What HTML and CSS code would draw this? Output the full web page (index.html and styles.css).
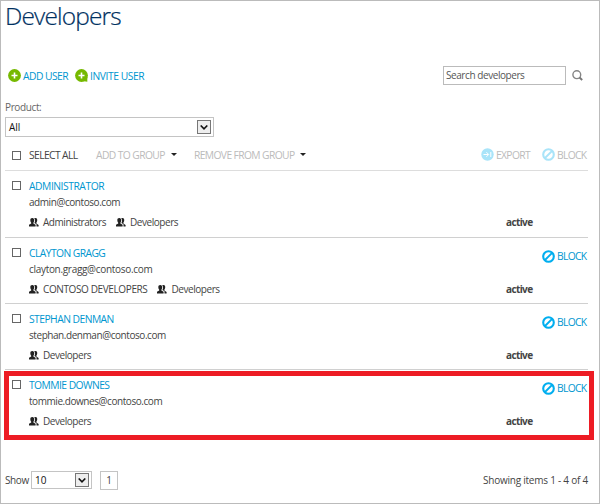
FILE: index.html
```html
<!DOCTYPE html>
<html lang="en">
<head>
<meta charset="utf-8">
<title>Developers</title>
<link rel="stylesheet" href="styles.css">
</head>
<body>
<svg class="defs" width="0" height="0">
  <symbol id="people" viewBox="0 0 10 9"><path d="M3.3 0C4.7 0 5.3 1 5.2 2.4 5.1 3.6 4.6 4.3 4.4 4.7V5.5L6.6 6.7V8.5H0V6.8L2.2 5.6V4.7C1.7 4.2 1.3 3.4 1.3 2.3 1.3.9 2 0 3.3 0Z"/><path d="M5.2.3C7.7-.4 8.4.8 8.2 2.6 8.1 3.8 7.7 4.2 7.4 4.8V5.6L9.6 6.9V8.5H7.5V6.2L5.4 5.1C6.1 3.8 6.4 1.6 5.2.3Z"/></symbol>
  <symbol id="block" viewBox="0 0 13 13"><circle cx="6.5" cy="6.5" r="5.3" fill="none" stroke="currentColor" stroke-width="2.1"/><path d="M3 10 10 3" stroke="currentColor" stroke-width="1.8"/></symbol>
  <symbol id="chevron" viewBox="0 0 8 5"><path d="M.7.5 4 3.8 7.3.5" fill="none" stroke="#111" stroke-width="1.6"/></symbol>
</svg>
<main class="page">
  <h1 class="title">Developers</h1>
  <div class="toolbar">
    <a class="action add"><svg width="13" height="13" viewBox="0 0 13 13"><circle cx="6.5" cy="6.5" r="6.4" fill="#76b900"/><path d="M3.5 6.5h6M6.5 3.5v6" stroke="#fff" stroke-width="1.6"/></svg><span>ADD USER</span></a>
    <a class="action invite"><svg width="13" height="13" viewBox="0 0 13 13"><circle cx="6.5" cy="6.5" r="6.4" fill="#76b900"/><path d="M12.3 8v4.8L7.5 12Z" fill="#76b900"/><path d="M3.5 6.5h6M6.5 3.5v6" stroke="#fff" stroke-width="1.6"/></svg><span>INVITE USER</span></a>
    <div class="search"><span>Search developers</span></div>
    <svg class="lens" width="11" height="11" viewBox="0 0 11 11"><circle cx="4.8" cy="4.7" r="3.9" fill="none" stroke="#858585" stroke-width="1.4"/><path d="M7.5 7.5 10.2 10" stroke="#777" stroke-width="1.9"/></svg>
  </div>
  <div class="label"><span>Product:</span></div>
  <div class="select product"><span>All</span><i class="drop"><svg width="8" height="5"><use href="#chevron"/></svg></i></div>
  <div class="bulk">
    <i class="check"></i><span class="all">SELECT ALL</span>
    <span class="off group-add">ADD TO GROUP</span><i class="caret"></i>
    <span class="off group-remove">REMOVE FROM GROUP</span><i class="caret"></i>
    <a class="action off export"><svg width="13" height="13" viewBox="0 0 13 13"><circle cx="6.5" cy="6.5" r="6.2" fill="#a9e4f9"/><path d="M2.5 6.5h5M5.4 4.2l2.3 2.3-2.3 2.3M9.8 4v5" fill="none" stroke="#fff" stroke-width="1"/></svg><span>EXPORT</span></a>
    <a class="action off block"><svg width="13" height="13"><use href="#block"/></svg><span>BLOCK</span></a>
  </div>
  <section class="row first">
    <i class="check"></i>
    <div class="info">
      <a class="name n1">ADMINISTRATOR</a><div class="mail m1">admin@contoso.com</div>
      <div class="groups"><span class="group"><svg width="10" height="9"><use href="#people"/></svg><span class="g-admin">Administrators</span></span><span class="group"><svg width="10" height="9"><use href="#people"/></svg><span>Developers</span></span></div>
    </div>
    <b class="status">active</b>
  </section>
  <section class="row">
    <i class="check"></i>
    <div class="info">
      <a class="name n2">CLAYTON GRAGG</a><div class="mail m2">clayton.gragg@contoso.com</div>
      <div class="groups"><span class="group"><svg width="10" height="9"><use href="#people"/></svg><span class="g-contoso">CONTOSO DEVELOPERS</span></span><span class="group"><svg width="10" height="9"><use href="#people"/></svg><span>Developers</span></span></div>
    </div>
    <b class="status">active</b>
    <a class="action block"><svg width="13" height="13"><use href="#block"/></svg><span>BLOCK</span></a>
  </section>
  <section class="row">
    <i class="check"></i>
    <div class="info">
      <a class="name n3">STEPHAN DENMAN</a><div class="mail m3">stephan.denman@contoso.com</div>
      <div class="groups"><span class="group"><svg width="10" height="9"><use href="#people"/></svg><span>Developers</span></span></div>
    </div>
    <b class="status">active</b>
    <a class="action block"><svg width="13" height="13"><use href="#block"/></svg><span>BLOCK</span></a>
  </section>
  <section class="row last">
    <i class="check"></i>
    <div class="info">
      <a class="name n4">TOMMIE DOWNES</a><div class="mail m4">tommie.downes@contoso.com</div>
      <div class="groups"><span class="group"><svg width="10" height="9"><use href="#people"/></svg><span>Developers</span></span></div>
    </div>
    <b class="status">active</b>
    <a class="action block"><svg width="13" height="13"><use href="#block"/></svg><span>BLOCK</span></a>
    <div class="highlight"></div>
  </section>
  <footer class="footer">
    <span class="show">Show</span>
    <div class="select size"><span>10</span><i class="drop"><svg width="8" height="5"><use href="#chevron"/></svg></i></div>
    <span class="pager">1</span>
    <span class="count">Showing items 1 - 4 of 4</span>
  </footer>
</main>
</body>
</html>
```
FILE: styles.css
```css
* { box-sizing: border-box; }
body { margin: 0; background: #fff; font: 10px/16px "Open Sans", "Noto Sans", sans-serif; color: #444; }
svg { display: block; flex: none; }
.defs { position: absolute; }
.page { width: 600px; height: 504px; border: 1px solid #bbb; padding: 0 11px 0 4px; white-space: nowrap; overflow: hidden; }
.title { margin: 0; height: 60px; font-size: 24.5px; line-height: 30px; font-weight: 300; color: #00305f; letter-spacing: -.85px; padding-left: 0; -webkit-text-stroke: .2px #00305f; }
.toolbar { display: flex; align-items: center; height: 30px; padding: 0 0 1px 3px; }
.action { display: flex; align-items: center; gap: 2px; color: #0096cf; font-size: 10.3px; letter-spacing: -.55px; }
.invite { letter-spacing: -.43px; }
.add { width: 67px; }
.search { margin-left: auto; width: 123px; height: 19px; border: 1px solid #bbb; padding-left: 2px; line-height: 17px; color: #555; letter-spacing: -.43px; }
.lens { margin: 0 5px 0 6px; }
.label { height: 26px; padding-top: 8px; color: #666; letter-spacing: -.38px; }
.select { display: flex; align-items: center; justify-content: space-between; border: 1px solid #c4c4c4; color: #111; }
.product { width: 209px; height: 20px; padding: 0 2px 0 3px; }
.drop { display: grid; place-items: center; width: 14px; height: 14px; border: 1px solid #777; background: #eee; }
.bulk { display: flex; align-items: center; height: 34px; border-bottom: 1px solid #ddd; padding: 2px 0 0 7px; }
.check { width: 9px; height: 9px; border: 1px solid #666; flex: none; }
.bulk .check { margin-top: 2px; }
.all { width: 67px; margin-left: 8px; font-size: 10.3px; letter-spacing: -.6px; }
.off { color: #bbb; font-size: 10.3px; }
.group-add { width: 75px; letter-spacing: -.6px; }
.group-remove { width: 106px; margin-left: 17px; letter-spacing: -.62px; }
.caret { border: 3px solid transparent; border-top-color: #222; border-bottom: 0; }
.export { width: 61px; margin-left: auto; letter-spacing: -.65px; }
.block { width: 46px; letter-spacing: -.7px; }
.block svg { color: #00aeef; }
.off.block svg { color: #a9e4f9; }
.row { position: relative; display: grid; grid-template-columns: 17px 477px 36px 46px; height: 66px; border-bottom: 1px solid #d0d0d0; padding: 7px 0 0 7px; }
.row.first { height: 67px; }
.row.last { border: 0; }
.row .check { margin-top: 3px; }
.name { display: block; color: #0096cf; font-size: 10.3px; }
.n1 { letter-spacing: -.45px; }
.n2 { letter-spacing: -.56px; }
.n3 { letter-spacing: -.53px; }
.n4 { letter-spacing: -.55px; }
.mail { letter-spacing: -.44px; }
.m2 { letter-spacing: -.31px; }
.groups { display: flex; gap: 10px; margin-top: 4px; letter-spacing: -.45px; }
.g-contoso { letter-spacing: -.38px; }
.group { display: flex; align-items: center; gap: 4px; fill: #222; }
.status { margin-top: 36px; letter-spacing: -.62px; }
.row .block { height: 16px; margin-top: 3px; }
.highlight { position: absolute; left: -1px; top: 1px; width: 590px; height: 69px; border: 5px solid #ed1c24; }
.footer { display: flex; align-items: center; height: 20px; margin-top: 34px; }
.show { width: 26px; letter-spacing: -.4px; flex: none; }
.size { width: 61px; height: 18px; padding: 0 2px 0 3px; }
.pager { width: 18px; height: 19px; margin-left: 8px; border: 1px solid #c4c4c4; text-align: center; }
.count { margin-left: auto; letter-spacing: -.23px; }
```
